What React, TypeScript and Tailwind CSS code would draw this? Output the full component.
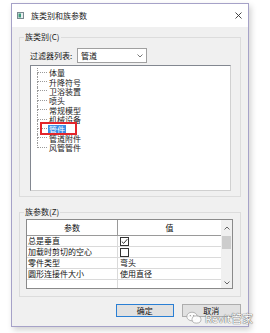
import React from "react";

const treeItems = ["体量", "升降符号", "卫浴装置", "喷头", "常规模型", "机械设备", "管件", "管道附件", "风管管件"];

const rows: { name: string; kind: "check" | "empty" | "text"; value?: string }[] = [
  { name: "总是垂直", kind: "check" },
  { name: "加载时剪切的空心", kind: "empty" },
  { name: "零件类型", kind: "text", value: "弯头" },
  { name: "圆形连接件大小", kind: "text", value: "使用直径" },
  { name: "", kind: "text", value: "" },
];

function Checkbox({ checked }: { checked: boolean }) {
  return (
    <div className="w-[9px] h-[9px] border border-[#333] bg-white flex items-center justify-center">
      {checked && (
        <svg width="7" height="7" viewBox="0 0 7 7">
          <path d="M0.8 3.6 L2.7 5.4 L6.3 1.2" fill="none" stroke="#222" strokeWidth="0.9" />
        </svg>
      )}
    </div>
  );
}

export default function App() {
  return (
    <div className="w-[270px] h-[333px] bg-white relative overflow-hidden font-['Noto_Sans_CJK_SC',sans-serif] text-[#111]">
      <div className="ml-[11px] mt-[3px] w-[238px] h-[324px] border border-[#a6a2c8] bg-[#f0f0f0] shadow-[2px_3px_6px_rgba(0,0,0,0.18)] flex flex-col">
        {/* title bar */}
        <div className="h-[23px] bg-white flex items-center pl-[5px] pr-[6px] shrink-0">
          <svg width="7" height="7" viewBox="0 0 7 7" className="shrink-0">
            <rect x="0.5" y="0.5" width="6" height="6" fill="#e8eef0" stroke="#7a8a90" />
            <rect x="1.5" y="1.5" width="2.5" height="4" fill="#3c9a7a" />
          </svg>
          <span className="ml-[7px] text-[8px] leading-none text-[#222]">族类别和族参数</span>
          <div className="flex-1" />
          <svg width="7" height="7" viewBox="0 0 7 7">
            <path d="M0.5 0.5 L6.5 6.5 M6.5 0.5 L0.5 6.5" stroke="#333" strokeWidth="0.9" />
          </svg>
        </div>

        {/* body */}
        <div className="px-[7px] flex flex-col">
          <fieldset className="mt-[5px] h-[165px] border border-[#dcdcdc] flex flex-col">
            <legend className="ml-[4px] px-[1px] text-[8px] leading-[10px] text-[#222]">族类别(C)</legend>
            <div className="mt-[6px] pl-[10px] flex items-center">
              <span className="text-[8px] leading-none w-[47px]">过滤器列表:</span>
              <div className="w-[70px] h-[15px] border border-[#a0a0a0] bg-white flex items-center pl-[3px] pr-[3px]">
                <span className="text-[8px] leading-none">管道</span>
                <div className="flex-1" />
                <svg width="6" height="4" viewBox="0 0 6 4">
                  <path d="M0.5 0.5 L3 3 L5.5 0.5" fill="none" stroke="#555" strokeWidth="0.8" />
                </svg>
              </div>
            </div>
            <div className="mt-[2px] ml-[10px] w-[201px] h-[126px] border border-t-[#828790] border-l-[#828790] border-r-[#d0d0d0] border-b-[#d0d0d0] bg-white relative pt-[2px]">
              {treeItems.map((t, i) => (
                <div key={t} className="h-[9.4px] flex items-center">
                  <div className="ml-[6px] w-[10px] h-full flex flex-col shrink-0">
                    <div className="h-1/2 border-l border-b border-dotted border-[#9a9a9a]" />
                    <div className={"h-1/2 " + (i < treeItems.length - 1 ? "border-l border-dotted border-[#9a9a9a]" : "")} />
                  </div>
                  <span
                    className={
                      "ml-[1px] inline-block h-[9px] overflow-hidden text-[8px] leading-[9px] px-[1px] " +
                      (t === "管件" ? "bg-[#3a8ee6] text-white" : "text-[#1a1a1a]")
                    }
                  >
                    {t}
                  </span>
                </div>
              ))}
              <div className="absolute left-[9px] top-[56px] w-[37px] h-[13px] border-2 border-[#e3262b]" />
            </div>
          </fieldset>

          <fieldset className="mt-[10px] h-[90px] border border-[#dcdcdc] flex flex-col">
            <legend className="ml-[4px] px-[1px] text-[8px] leading-[10px] text-[#222]">族参数(Z)</legend>
            <div className="mt-[2px] ml-[6px] w-[207px] h-[70px] border border-[#8a8a8a] bg-white flex overflow-hidden">
              <div className="flex-1 flex flex-col">
                <div className="h-[16px] flex border-b border-[#9a9a9a] bg-white shrink-0">
                  <div className="w-[91px] border-r border-[#9a9a9a] flex items-center justify-center text-[8px] leading-none">参数</div>
                  <div className="flex-1 flex items-center justify-center text-[8px] leading-none">值</div>
                </div>
                {rows.map((r, i) => (
                  <div key={i} className="h-[11px] flex border-b border-[#dadada] shrink-0">
                    <div className="w-[91px] border-r border-[#dadada] flex items-center pl-[1px] text-[8px] leading-none whitespace-nowrap overflow-hidden">
                      {r.name}
                    </div>
                    <div className="flex-1 flex items-center pl-[2px] text-[8px] leading-none">
                      {r.kind === "check" && <Checkbox checked />}
                      {r.kind === "empty" && <Checkbox checked={false} />}
                      {r.kind === "text" && r.value}
                    </div>
                  </div>
                ))}
              </div>
              <div className="w-[11px] bg-[#f0f0f0] flex flex-col items-center shrink-0">
                <div className="h-[16px] flex items-center justify-center">
                  <svg width="6" height="4" viewBox="0 0 6 4">
                    <path d="M0.5 3.5 L3 1 L5.5 3.5" fill="none" stroke="#555" strokeWidth="0.9" />
                  </svg>
                </div>
                <div className="w-[9px] h-[13px] bg-[#cdcdcd]" />
                <div className="flex-1" />
                <div className="h-[10px] flex items-center justify-center">
                  <svg width="6" height="4" viewBox="0 0 6 4">
                    <path d="M0.5 0.5 L3 3 L5.5 0.5" fill="none" stroke="#555" strokeWidth="0.9" />
                  </svg>
                </div>
              </div>
            </div>
          </fieldset>

          <div className="mt-[7px] flex">
            <div className="ml-[97px] w-[58px] h-[13px] border border-[#2a7fd4] bg-[#e1e1e1] flex items-center justify-center text-[8px] leading-none">确定</div>
            <div className="ml-[8px] w-[60px] h-[13px] border border-[#adadad] bg-[#e1e1e1] flex items-center justify-center text-[8px] leading-none">取消</div>
          </div>
        </div>
      </div>

      {/* watermark */}
      <div className="absolute left-[186px] top-[311px] flex items-center">
        <svg width="16" height="14" viewBox="0 0 16 14">
          <ellipse cx="6" cy="5.5" rx="5.2" ry="4.3" fill="rgba(255,255,255,0.85)" stroke="#9a9a9a" strokeWidth="0.7" />
          <ellipse cx="10.5" cy="8.5" rx="4.5" ry="3.6" fill="rgba(255,255,255,0.9)" stroke="#9a9a9a" strokeWidth="0.7" />
          <circle cx="4.3" cy="4.6" r="0.6" fill="#8a8a8a" />
          <circle cx="7.7" cy="4.6" r="0.6" fill="#8a8a8a" />
        </svg>
        <span className="ml-[3px] text-[11px] leading-none text-white [text-shadow:0_0_1px_#555,0_0_1px_#555] font-['Noto_Sans_CJK_SC',sans-serif]">
          Revit管家
        </span>
      </div>
    </div>
  );
}
